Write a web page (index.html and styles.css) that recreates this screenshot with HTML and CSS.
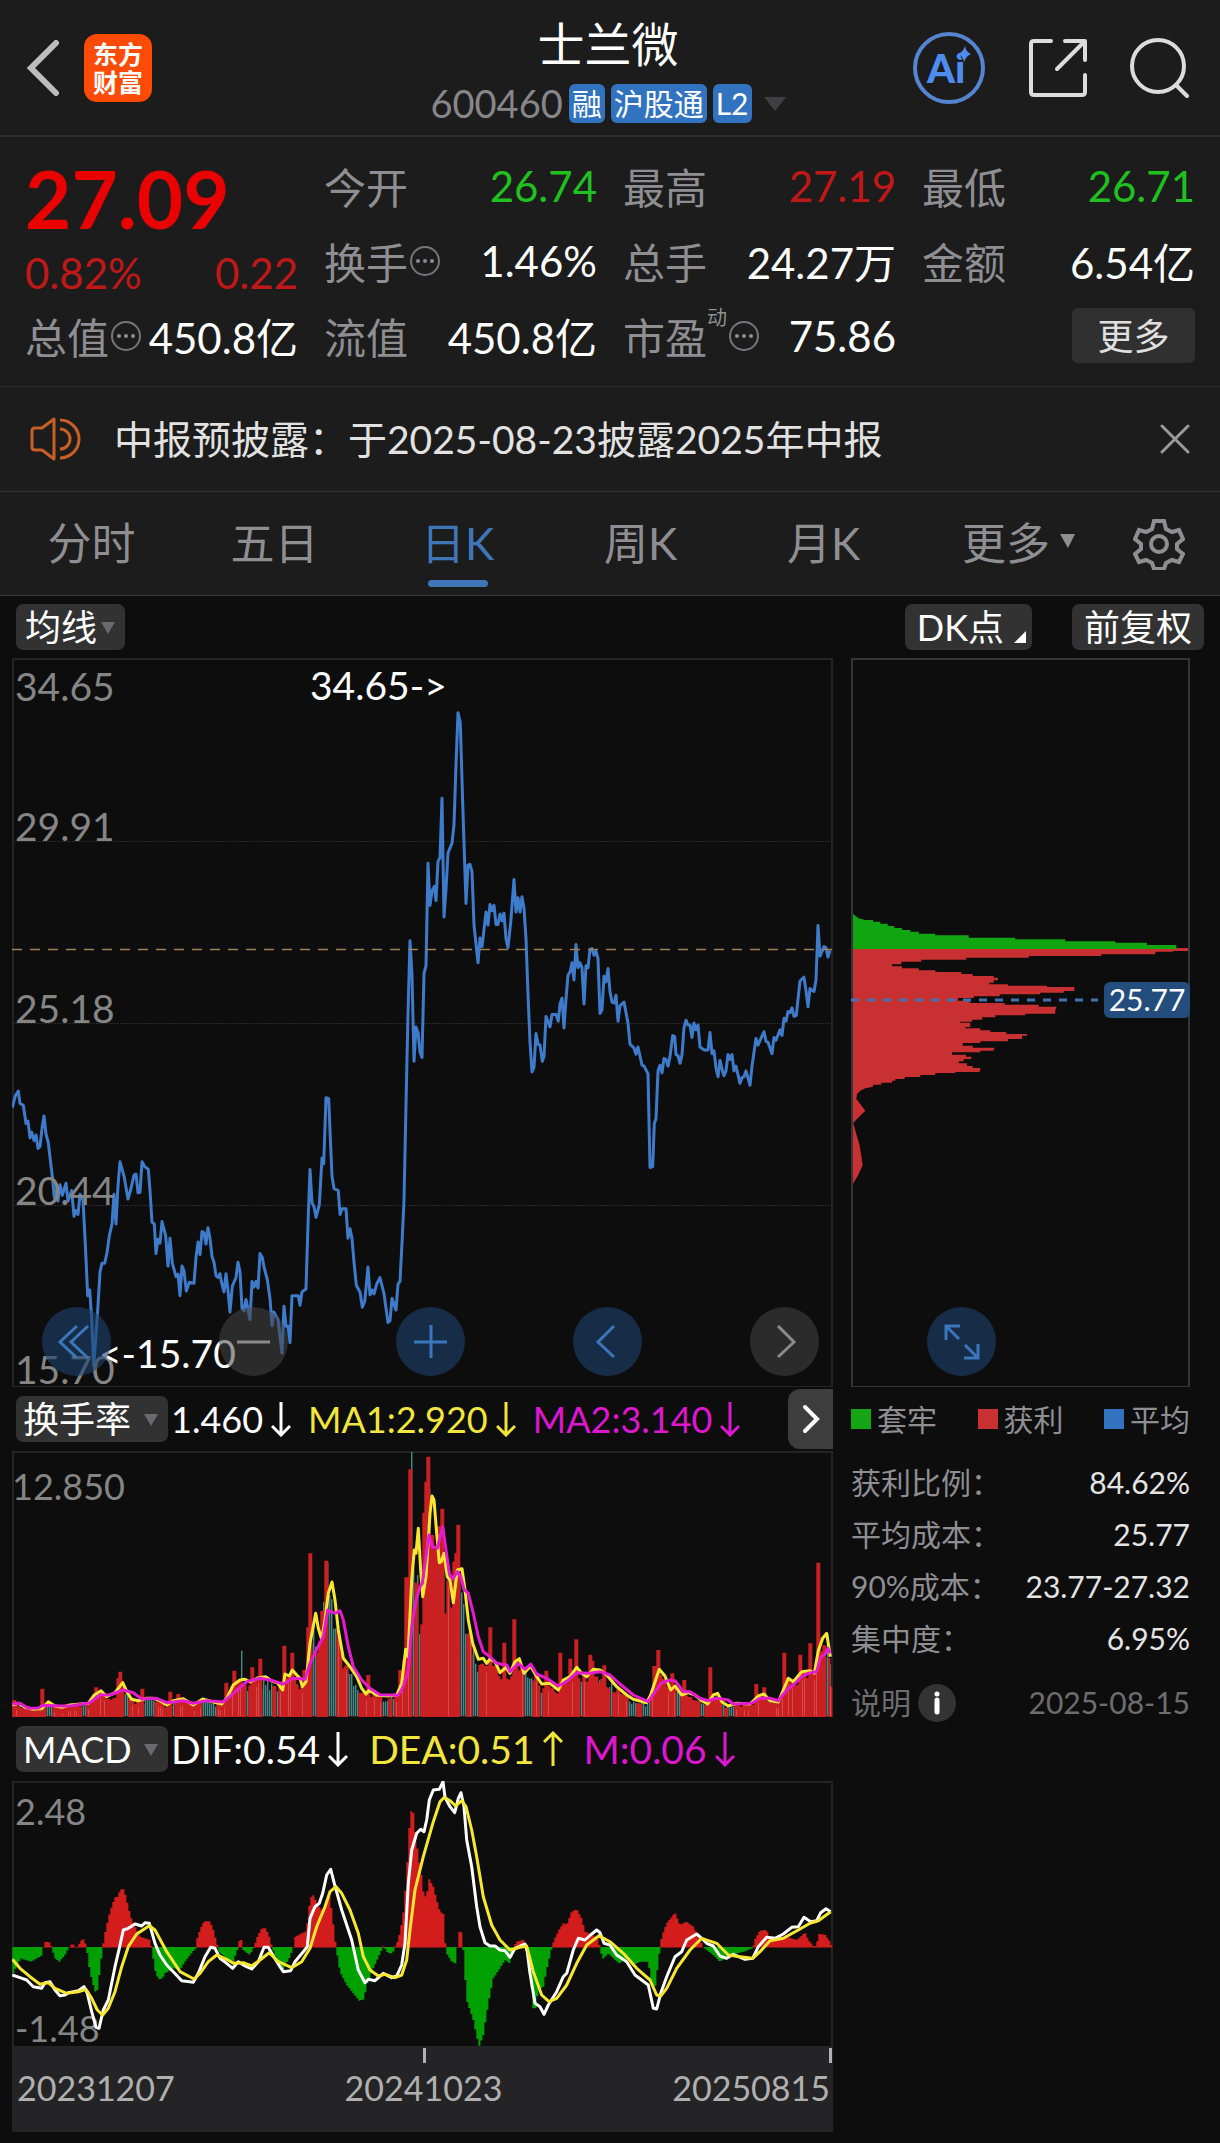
FILE: index.html
```html
<!DOCTYPE html>
<html lang="zh-CN">
<head>
<meta charset="utf-8">
<meta name="viewport" content="width=device-width, initial-scale=1">
<title>士兰微 600460</title>
<link rel="stylesheet" href="styles.css">
</head>
<body>
<header class="topbar">
  <div class="topbar-left">
    <button class="icon-btn" aria-label="返回"><svg width="34" height="56" viewBox="0 0 34 56"><path d="M30 3 5 28l25 25" fill="none" stroke="#bdbdbd" stroke-width="6" stroke-linecap="round"/></svg></button>
    <div class="logo"><span>东方</span><span>财富</span></div>
  </div>
  <div class="topbar-title">
    <h1>士兰微</h1>
    <div class="code-row">
      <span class="code">600460</span>
      <span class="chip">融</span><span class="chip">沪股通</span><span class="chip">L2</span>
      <svg class="code-arrow" width="22" height="14" viewBox="0 0 22 14"><path d="M0 0h22L11 14z" fill="#3f3f41"/></svg>
    </div>
  </div>
  <div class="topbar-right">
    <button class="icon-btn" aria-label="Ai 助手"><svg width="74" height="74" viewBox="0 0 74 74"><circle cx="37" cy="37" r="34" fill="none" stroke="#5585d0" stroke-width="4"/><text class="ai-text" x="15" y="52">Ai</text><circle cx="54" cy="23" r="6" fill="#1c1c1c"/><path d="M53 15q1 6 6 8-5 2-7 8-1-6-6-8 5-2 7-8z" fill="#4f8cf0"/></svg></button>
    <button class="icon-btn" aria-label="分享"><svg width="60" height="60" viewBox="0 0 60 60"><g fill="none" stroke="#dcdcdc" stroke-width="4" stroke-linecap="round" stroke-linejoin="round"><path d="M23 3H6q-3 0-3 3v48q0 3 3 3h48q3 0 3-3V37M37 3h20v19M56 4 29 31"/></g></svg></button>
    <button class="icon-btn" aria-label="搜索"><svg width="60" height="60" viewBox="0 0 60 60"><g fill="none" stroke="#dcdcdc" stroke-width="4" stroke-linecap="round"><circle cx="28" cy="28" r="26"/><path d="M46 47 57 58"/></g></svg></button>
  </div>
</header>

<section class="quote" aria-label="行情">
  <div class="price-block">
    <strong class="price">27.09</strong>
    <div class="change"><span>0.82%</span><span>0.22</span></div>
  </div>
  <div class="item"><span class="k">今开</span><span class="v down">26.74</span></div>
  <div class="item"><span class="k">最高</span><span class="v up">27.19</span></div>
  <div class="item"><span class="k">最低</span><span class="v down">26.71</span></div>
  <div class="item"><span class="k">换手<svg class="dots" viewBox="0 0 30 30"><use href="#dots"/></svg></span><span class="v">1.46%</span></div>
  <div class="item"><span class="k">总手</span><span class="v">24.27万</span></div>
  <div class="item"><span class="k">金额</span><span class="v">6.54亿</span></div>
  <div class="item"><span class="k">总值<svg class="dots" viewBox="0 0 30 30"><use href="#dots"/></svg></span><span class="v">450.8亿</span></div>
  <div class="item"><span class="k">流值</span><span class="v">450.8亿</span></div>
  <div class="item"><span class="k">市盈<sup>动</sup><svg class="dots" viewBox="0 0 30 30"><g id="dots"><circle cx="15" cy="15" r="14" fill="none" stroke="#77777b" stroke-width="2"/><g fill="#8e8e93"><circle cx="8" cy="15" r="2"/><circle cx="15" cy="15" r="2"/><circle cx="22" cy="15" r="2"/></g></g></svg></span><span class="v">75.86</span></div>
  <div class="item item-end"><button class="more-btn">更多</button></div>
</section>

<section class="notice">
  <svg width="52" height="44" viewBox="0 0 52 44"><g fill="none" stroke="#c85f24" stroke-width="3"><path d="M24 2v40L12 33H5q-3 0-3-3V14q0-3 3-3h7z" stroke-linejoin="round"/><path d="M30 3a19 19 0 0 1 0 38M30 12a10 10 0 0 1 0 20"/></g></svg>
  <p>中报预披露：于2025-08-23披露2025年中报</p>
  <button class="icon-btn" aria-label="关闭"><svg width="30" height="30" viewBox="0 0 30 30"><path d="M2 2l26 26M28 2 2 28" stroke="#9a9a9a" stroke-width="3" stroke-linecap="round"/></svg></button>
</section>

<nav class="tabs">
  <button class="tab">分时</button>
  <button class="tab">五日</button>
  <button class="tab active">日K</button>
  <button class="tab">周K</button>
  <button class="tab">月K</button>
  <button class="tab tab-more">更多<svg width="15" height="14" viewBox="0 0 15 14"><path d="M0 0h15L8 14z" fill="#8e8e93"/></svg></button>
  <button class="tab-gear" aria-label="设置"><svg width="52" height="52" viewBox="0 0 52 52"><g fill="none" stroke="#8e8e93" stroke-width="4"><path d="M21 3h10l2 8 6 3 7-2 4 9-6 5v5l6 5-4 8-7-2-6 3-2 6H21l-2-6-6-3-7 2-4-8 6-5v-5l-6-5 4-9 7 2 6-3z"/><circle cx="26" cy="26" r="8"/></g></svg></button>
</nav>

<main class="charts">
  <div class="toolbar">
    <span class="select tight"><select aria-label="主图指标"><option>均线</option></select></span>
    <div class="toolbar-right">
      <button class="pill dk">DK点</button>
      <button class="pill">前复权</button>
    </div>
  </div>

  <div class="columns price-row">
    <svg id="price" class="chart" viewBox="0 0 821 729" role="img" aria-label="日K 走势">
      <rect class="frame" x="1" y="1" width="819" height="728"/>
      <path class="gridline" d="M0 183.500h820M0 365.500h820M0 547.500h820"/>
      <polyline id="closeLine" class="line-blue"/>
      <path d="M0 291.500h820" stroke="#a08050" stroke-width="1.500" stroke-dasharray="10 8"/>
      <g class="axis-label big">
        <text x="3" y="43">34.65</text><text x="3" y="183">29.91</text><text x="3" y="365">25.18</text><text x="3" y="547">20.44</text><text x="3" y="726">15.70</text>
      </g>
      <g class="mark"><text x="298" y="42">34.65-&gt;</text><text x="87" y="710">&lt;-15.70</text></g>
    </svg>
    <svg id="cost" class="chart" viewBox="0 0 339 729" role="img" aria-label="筹码分布">
      <path id="costRed" fill="#c93031"/><path id="costGreen" fill="#12a512"/>
      <rect class="frame strong" x="1" y="1" width="337" height="728"/>
      <path d="M0 342h247" stroke="#3f72b5" stroke-width="3" stroke-dasharray="8 8"/>
      <rect x="253" y="324" width="86" height="36" rx="6" fill="#234d7c"/>
      <text class="avg" x="296" y="353">25.77</text>
    </svg>
    <div class="controls">
      <button class="round" aria-label="最早"><svg viewBox="0 0 69 69"><path d="M35 19 18 35l17 16M46 19 29 35l17 16"/></svg></button>
      <button class="round gray" aria-label="缩小"><svg viewBox="0 0 69 69"><path d="M18 35h33"/></svg></button>
      <button class="round" aria-label="放大"><svg viewBox="0 0 69 69"><path d="M18 35h33M35 18v33"/></svg></button>
      <button class="round" aria-label="向左"><svg viewBox="0 0 69 69"><path d="M41 19 25 35l16 15"/></svg></button>
      <button class="round gray" aria-label="向右"><svg viewBox="0 0 69 69"><path d="M28 19l16 16-16 15"/></svg></button>
      <button class="round" aria-label="全屏"><svg viewBox="0 0 69 69"><path d="M19 33V19h14M20 20l12 12M51 37v14H37M50 50 38 38"/></svg></button>
    </div>
  </div>

  <div class="columns">
    <div class="left">
      <div class="indicator compact">
        <span class="select"><select aria-label="副图指标一"><option>换手率</option></select></span>
        <span class="ind white">1.460<svg class="arr" viewBox="0 0 20 36"><path d="M10 1v32M1 25l9 9 9-9"/></svg></span>
        <span class="ind yellow">MA1:2.920<svg class="arr" viewBox="0 0 20 36"><path d="M10 1v32M1 25l9 9 9-9"/></svg></span>
        <span class="ind pink">MA2:3.140<svg class="arr" viewBox="0 0 20 36"><path d="M10 1v32M1 25l9 9 9-9"/></svg></span>
        <button class="next" aria-label="更多指标"><svg width="18" height="30" viewBox="0 0 18 30"><path d="M3 3l12 12L3 27" fill="none" stroke="#fff" stroke-width="4" stroke-linecap="round"/></svg></button>
      </div>
      <svg class="chart" viewBox="0 0 821 266" role="img" aria-label="换手率">
        <rect class="frame" x="1" y="1" width="819" height="265"/>
        <path id="volCyan" fill="#5fbcbc"/><path id="volRed" fill="#c92022"/><path id="volSlit" fill="#dc7474"/>
        <polyline id="ma1" class="line-yellow"/><polyline id="ma2" class="line-pink"/>
        <g class="axis-label"><text x="0" y="49">12.850</text></g>
      </svg>
      <div class="indicator">
        <span class="select"><select aria-label="副图指标二"><option>MACD</option></select></span>
        <span class="ind white">DIF:0.54<svg class="arr" viewBox="0 0 20 36"><path d="M10 1v32M1 25l9 9 9-9"/></svg></span>
        <span class="ind yellow">DEA:0.51<svg class="arr" viewBox="0 0 20 36"><path d="M10 35V3M1 11l9-9 9 9"/></svg></span>
        <span class="ind pink">M:0.06<svg class="arr" viewBox="0 0 20 36"><path d="M10 1v32M1 25l9 9 9-9"/></svg></span>
      </div>
      <svg class="chart" viewBox="0 0 821 266" role="img" aria-label="MACD">
        <rect class="frame" x="1" y="1" width="819" height="265"/>
        <g class="axis-label"><text x="3" y="44">2.48</text><text x="3" y="261">-1.48</text></g>
        <path id="macdRed" fill="#d31c1c"/><path id="macdGreen" fill="#00a000"/>
        <polyline id="dif" class="line-white"/><polyline id="dea" class="line-yellow"/>
      </svg>
      <div class="dates"><span>20231207</span><span class="tick mid">20241023</span><span class="tick end">20250815</span></div>
    </div>

    <aside class="cost-info">
      <ul class="legend">
        <li><i class="sq green"></i>套牢</li><li><i class="sq red"></i>获利</li><li><i class="sq blue"></i>平均</li>
      </ul>
      <dl>
        <div><dt>获利比例：</dt><dd>84.62%</dd></div>
        <div><dt>平均成本：</dt><dd>25.77</dd></div>
        <div><dt>90%成本：</dt><dd>23.77-27.32</dd></div>
        <div><dt>集中度：</dt><dd>6.95%</dd></div>
      </dl>
      <div class="explain">
        <span>说明</span>
        <button class="info" aria-label="说明"><svg width="39" height="39" viewBox="0 0 39 39"><circle cx="20" cy="20" r="19" fill="#333"/><circle cx="20" cy="11" r="2.500" fill="#fff"/><path d="M20 17v12" stroke="#fff" stroke-width="5" stroke-linecap="round"/></svg></button>
        <time datetime="2025-08-15">2025-08-15</time>
      </div>
    </aside>
  </div>
</main>
<script src="charts.js"></script>
</body>
</html>
```
FILE: styles.css
```css
* { box-sizing: border-box; }
body {
  margin: 0;
  background: #0d0d0d;
  color: #fff;
  font-family: Lato, "Noto Sans CJK SC", sans-serif;
}
button, select {
  font: inherit;
  color: inherit;
  border: 0;
  margin: 0;
  padding: 0;
  background: none;
}
h1, p, ul, dl, dd { margin: 0; padding: 0; }
svg { display: block; flex: none; }

.topbar, .quote, .notice, .tabs { background: #1c1c1c; }

.topbar {
  display: grid;
  grid-template-columns: 1fr auto 1fr;
  align-items: center;
  height: 137px;
  padding: 0 30px 0 26px;
  border-bottom: 2px solid #2e2e2f;
}
.topbar-left { display: flex; align-items: center; gap: 24px; }
.topbar-right { display: flex; align-items: center; justify-content: flex-end; gap: 42px; }
.logo {
  width: 68px;
  height: 68px;
  padding: 6px 0;
  border-radius: 13px;
  background: #ff4b05;
  font-size: 25px;
  font-weight: 700;
  line-height: 28px;
  text-align: center;
}
.logo span { display: block; }
.topbar-title { text-align: center; }
h1 { font-size: 47px; font-weight: 400; line-height: 72px; }
.code-row { display: flex; align-items: center; gap: 6px; line-height: 39px; height: 48px; }
.code { font-size: 38px; color: #87878b; }
.chip { padding: 0 3px; border-radius: 6px; background: #3273c0; font-size: 30px; height: 39px; line-height: 38px; }
.code-arrow { margin-left: 6px; }
.ai-text { font-size: 40px; font-weight: 900; fill: #4f8cf0; }

.quote {
  display: grid;
  grid-template-columns: repeat(4, minmax(0, 1fr));
  grid-template-rows: repeat(3, 75px);
  column-gap: 26px;
  padding: 13px 25px 11px;
  border-bottom: 1px solid #2a2a2b;
  font-size: 42px;
}
.price-block { grid-row: span 2; color: #c01818; }
.price { display: block; font-size: 80px; font-weight: 700; line-height: 96px; color: #eb0000; }
.change { display: flex; justify-content: space-between; line-height: 54px; }
.item { display: flex; align-items: center; justify-content: space-between; padding-bottom: 4px; white-space: nowrap; }
.item-end { justify-content: flex-end; }
.k { display: flex; align-items: center; color: #8e8e93; }
.k sup { align-self: flex-start; font-size: 20px; line-height: 24px; }
.dots { width: 30px; height: 30px; margin-left: 2px; }
.up { color: #c01818; }
.down { color: #20c020; }
.more-btn { width: 123px; height: 55px; border-radius: 6px; background: #303031; color: #e0e0e0; font-size: 36px; line-height: 50px; }

.notice {
  display: flex;
  align-items: center;
  gap: 32px;
  height: 105px;
  padding: 0 30px;
  border-bottom: 1px solid #333435;
  color: #e2e2e2;
  font-size: 39px;
}
.notice p { flex: 1; padding-bottom: 5px; }

.tabs {
  display: grid;
  grid-template-columns: repeat(6, minmax(0, 3fr)) minmax(0, 2fr);
  height: 104px;
  border-bottom: 1px solid #3a3a3b;
  color: #8e8e93;
  font-size: 44px;
}
.tab { position: relative; padding-bottom: 5px; }
.tab.active { color: #3f76b8; }
.tab.active::after {
  content: "";
  position: absolute;
  left: calc(50% - 30px);
  bottom: 8px;
  width: 60px;
  height: 7px;
  border-radius: 4px;
  background: #3f76b8;
}
.tab-more { display: flex; align-items: center; justify-content: center; gap: 10px; padding-left: 24px; }
.tab-gear { display: flex; align-items: center; justify-content: center; }

.toolbar { display: flex; justify-content: space-between; align-items: center; height: 62px; padding: 0 16px; }
.toolbar-right { display: flex; gap: 40px; }
.pill { position: relative; height: 46px; padding: 0 12px; border-radius: 7px; background: #323233; font-size: 36px; line-height: 44px; }
.dk { padding-right: 28px; }
.dk::after {
  content: "";
  position: absolute;
  right: 6px;
  bottom: 7px;
  border: 6px solid;
  border-color: transparent #fff #fff transparent;
}
.select { position: relative; display: flex; border-radius: 7px; background: #323233; }
.select select { appearance: none; height: 46px; padding: 0 36px 0 7px; font-size: 36px; line-height: 44px; }
.select.tight select { padding: 0 27px 0 9px; }
.select option { background: #323233; }
.select::after {
  content: "";
  position: absolute;
  right: 10px;
  top: 18px;
  border: 7px solid transparent;
  border-top: 12px solid #6a6a6c;
  border-bottom: 0;
  pointer-events: none;
}

.columns {
  display: grid;
  grid-template-columns: minmax(0, 821fr) minmax(0, 339fr);
  column-gap: 18px;
  padding: 0 30px 0 12px;
}
.price-row { position: relative; }
.chart { width: 100%; height: auto; }
.frame { fill: none; stroke: #242425; stroke-width: 2; }
.frame.strong { stroke: #353536; }
.gridline { stroke: #29292a; stroke-dasharray: 2 1; }
.axis-label { font-size: 36px; fill: #858585; }
.axis-label.big { font-size: 39px; }
.mark { font-size: 39px; fill: #fff; }
.avg { font-size: 30px; fill: #fff; text-anchor: middle; }
.line-blue, .line-yellow, .line-pink, .line-white { fill: none; stroke-width: 3; stroke-linejoin: round; }
.line-blue { stroke: #3e7bcb; }
.line-yellow { stroke: #f7e732; }
.line-pink { stroke: #e51bcf; }
.line-white { stroke: #fff; }

.controls { position: absolute; left: 42px; right: 224px; bottom: 11px; display: flex; justify-content: space-between; }
.round { width: 69px; height: 69px; border-radius: 50%; background: rgba(30, 66, 110, 0.600); }
.round svg { width: 69px; height: 69px; fill: none; stroke: #3b77bd; stroke-width: 3; }
.round.gray { background: rgba(70, 70, 70, 0.550); }
.round.gray svg { stroke: #8b8b8b; }

.indicator { display: flex; align-items: center; height: 64px; padding-left: 4px; font-size: 39px; white-space: nowrap; }
.ind { display: flex; align-items: center; gap: 8px; margin: 0 18px 0 3px; }
.indicator.compact { font-size: 36px; }
.compact .ind { margin-right: 14px; }
.arr { width: 20px; height: 36px; fill: none; stroke: currentColor; stroke-width: 3; }
.yellow { color: #f2e63c; }
.pink { color: #dc17cf; }
.next {
  display: flex;
  align-items: center;
  justify-content: center;
  width: 45px;
  height: 60px;
  margin-left: auto;
  border-radius: 12px 0 0 12px;
  background: #3d3d3e;
}

.dates {
  display: flex;
  justify-content: space-between;
  height: 85px;
  padding: 0 3px 0 5px;
  background: #242426;
  color: #b0b0b0;
  font-size: 34px;
  line-height: 82px;
}
.tick { position: relative; }
.tick::before { content: ""; position: absolute; top: 1px; width: 3px; height: 15px; background: #b0b0b0; }
.mid::before { left: 50%; }
.end::before { right: -2px; }

.cost-info { padding-top: 12px; color: #8e8e93; font-size: 30px; line-height: 40px; }
.legend { display: flex; justify-content: space-between; list-style: none; }
.legend li { display: flex; align-items: center; gap: 6px; }
.sq { width: 20px; height: 20px; }
.green { background: #16a615; }
.red { background: #c93031; }
.blue { background: #3273c0; }
.cost-info dl { padding: 17px 0 12px; }
.cost-info dl div { display: flex; justify-content: space-between; line-height: 52px; }
.cost-info dd { color: #e4e4e4; }
.explain { display: flex; align-items: center; padding-top: 6px; color: #6d6d70; }
.info { margin-left: 6px; }
.explain time { margin-left: auto; }

.charts { padding-bottom: 11px; }
```
FILE: charts.js
```js
// Series are stored at three units per chart pixel, measured from the left
// edge of the screen; the price series has its own vertical unit.
const close = `37,957 46,932 55,922 60,948 70,952 78,990 84,985 90,1020 95,1008 102,1026 108,1014 114,1042 120,1038 126,1000 132,974 138,1012 145,1030 158,1108 163,1145 168,1130 174,1152 180,1118 187,1140 198,1115 204,1152 215,1130 222,1184 228,1172 234,1180 240,1138 249,1150 256,1242 263,1350 269,1338 275,1400 281,1497 287,1440 293,1380 300,1300 306,1282 314,1282 321,1260 328,1225 336,1200 342,1138 348,1200 354,1120 360,1070 372,1100 384,1148 392,1128 402,1098 408,1096 414,1135 420,1134 426,1070 434,1080 445,1086 450,1130 456,1196 463,1200 468,1262 474,1232 480,1240 486,1195 497,1225 504,1288 510,1230 517,1282 528,1310 534,1305 540,1350 546,1288 552,1298 559,1340 568,1322 582,1324 588,1270 594,1238 600,1264 606,1216 612,1218 618,1242 624,1208 630,1230 636,1268 642,1280 648,1308 654,1312 660,1304 664,1320 672,1342 678,1304 684,1340 690,1384 697,1330 708,1312 714,1280 720,1300 726,1376 732,1382 738,1358 750,1400 756,1320 762,1332 768,1320 774,1334 780,1262 787,1270 792,1290 802,1316 810,1356 816,1412 821,1384 834,1400 846,1470 852,1372 858,1414 864,1414 870,1448 876,1350 895,1350 900,1370 906,1342 918,1336 924,1200 930,1086 936,1156 942,1164 948,1186 958,1160 966,1062 971,1074 978,936 986,938 991,1020 996,1100 1002,1126 1015,1130 1020,1180 1026,1168 1038,1168 1044,1230 1050,1210 1056,1230 1062,1280 1069,1328 1080,1342 1087,1374 1094,1362 1104,1290 1110,1348 1116,1338 1122,1346 1130,1326 1140,1312 1152,1346 1164,1406 1170,1402 1176,1356 1188,1380 1194,1326 1200,1320 1206,1240 1212,1150 1218,950 1224,760 1230,608 1236,680 1242,860 1248,788 1254,800 1260,840 1266,852 1272,676 1278,660 1284,446 1290,534 1296,504 1303,494 1308,524 1314,442 1320,434 1326,310 1332,558 1338,500 1344,424 1356,404 1362,365 1368,240 1374,131 1381,152 1388,320 1398,530 1404,450 1410,448 1416,464 1422,575 1434,654 1440,602 1446,620 1458,548 1464,575 1470,532 1476,545 1482,534 1488,574 1494,574 1500,552 1506,566 1512,550 1518,604 1524,622 1532,570 1542,480 1548,548 1554,518 1560,548 1566,516 1572,540 1578,604 1584,720 1590,820 1596,882 1602,872 1608,802 1614,824 1620,826 1627,860 1632,850 1638,766 1650,788 1656,762 1668,762 1675,776 1680,740 1686,728 1692,790 1698,730 1704,680 1711,672 1716,654 1722,690 1728,616 1734,664 1740,654 1746,664 1752,740 1758,660 1764,664 1770,626 1776,624 1782,638 1788,630 1794,645 1800,760 1806,752 1812,682 1818,694 1824,666 1830,714 1836,736 1843,738 1848,722 1854,776 1860,744 1872,736 1884,780 1890,824 1902,832 1908,845 1914,830 1926,868 1932,870 1944,886 1950,1082 1958,1080 1963,990 1968,980 1974,880 1980,868 1986,884 1992,854 1998,856 2004,870 2010,850 2018,806 2024,808 2028,846 2034,848 2040,864 2046,846 2052,790 2058,774 2064,784 2070,784 2076,810 2082,780 2088,794 2094,784 2100,830 2112,836 2124,836 2130,800 2136,844 2142,838 2148,874 2154,892 2160,858 2166,876 2172,890 2178,880 2184,846 2190,856 2196,846 2202,880 2208,870 2220,906 2226,894 2232,892 2238,880 2250,910 2256,870 2268,812 2274,826 2292,798 2298,818 2304,820 2316,844 2322,810 2328,816 2340,794 2346,806 2352,770 2358,776 2364,756 2370,758 2376,748 2382,766 2389,764 2394,730 2400,692 2412,684 2418,712 2424,746 2430,708 2442,714 2448,690 2454,576 2460,640 2472,620 2478,622 2484,642 2490,628`;
const ma1 = `37,975 55,970 75,982 100,988 125,986 145,965 165,978 185,982 210,975 265,970 283,945 303,932 320,950 345,938 368,908 382,938 395,958 415,962 440,955 460,955 480,962 500,975 520,962 550,956 580,975 608,957 640,966 665,972 680,955 700,915 720,900 735,898 750,906 775,893 797,890 815,903 832,908 848,930 855,882 868,888 877,870 890,885 900,895 907,920 918,905 930,790 947,700 955,745 965,778 975,720 985,640 996,606 1005,660 1015,750 1030,835 1050,860 1070,890 1085,925 1098,942 1108,930 1130,946 1165,948 1190,945 1205,910 1217,808 1224,830 1235,600 1243,510 1248,520 1255,445 1262,570 1268,650 1278,590 1290,400 1296,348 1302,360 1310,460 1318,548 1324,545 1332,520 1342,590 1350,600 1360,668 1372,570 1386,566 1395,630 1405,720 1418,790 1435,838 1450,835 1460,850 1470,838 1485,845 1500,878 1518,862 1530,880 1545,845 1558,836 1572,880 1592,858 1610,890 1625,912 1650,910 1675,930 1690,900 1710,890 1730,862 1745,880 1760,890 1780,868 1800,870 1820,885 1850,920 1880,945 1900,958 1940,968 1952,945 1965,905 1978,868 1995,888 2012,930 2025,918 2045,945 2065,938 2085,945 2105,962 2123,972 2140,945 2153,940 2165,965 2185,978 2210,970 2250,972 2275,948 2292,942 2310,962 2335,966 2350,930 2365,895 2380,905 2405,875 2430,872 2443,880 2455,812 2468,775 2480,760 2491,830`;
const ma2 = `37,972 60,970 85,985 115,984 130,976 185,978 215,977 270,968 300,945 330,945 370,930 400,938 425,957 470,955 500,968 550,962 580,970 620,962 670,966 700,940 740,905 780,895 810,900 850,912 880,895 915,898 930,850 950,808 970,770 983,690 1005,700 1020,692 1030,720 1045,800 1060,860 1085,900 1110,925 1140,944 1170,945 1195,946 1210,920 1225,870 1235,740 1247,665 1260,620 1267,610 1275,550 1287,465 1297,500 1312,505 1328,440 1338,510 1348,580 1358,598 1372,575 1382,590 1392,628 1405,640 1420,700 1435,770 1450,815 1470,830 1490,850 1520,855 1530,875 1555,850 1575,868 1592,852 1610,882 1640,895 1675,918 1700,905 1730,878 1770,880 1800,875 1830,885 1860,912 1900,945 1945,965 1965,935 1985,908 2010,900 2025,902 2050,935 2070,935 2100,955 2125,962 2150,955 2185,960 2200,972 2255,970 2280,955 2310,955 2335,962 2360,930 2380,915 2405,890 2425,880 2450,875 2462,832 2475,822 2484,805 2491,820`;
const redSpikes = `43,960 127,926 289,922 361,875 355,895 427,926 511,935 535,942 679,908 703,872 757,862 781,836 853,797 877,818 913,870 931,520 925,742 979,542 967,692 1105,885 1201,870 1213,840 1219,592 1231,268 1249,608 1273,398 1279,305 1285,230 1297,465 1327,386 1321,438 1315,440 1375,434 1369,520 1363,545 1471,742 1513,788 1543,718 1639,872 1681,818 1711,836 1729,778 1771,824 1777,842 1813,856 1975,810 1963,858 2017,880 2053,900 2131,862 2269,912 2293,922 2353,818 2401,824 2431,790 2455,548 2495,920`;
const cyanSpikes = `727,812 985,548 973,666 997,658 1237,216 1255,585 1291,326 1261,762 1333,540 2461,770 2485,765`;
const cyanRuns = `60,60 72,75 140,160 248,262 370,385 435,465 490,492 508,525 605,650 725,730 740,745 785,815 830,835 892,898 936,950 983,1012 1045,1050 1058,1076 1148,1166 1178,1183 1235,1246 1254,1262 1290,1292 1332,1336 1381,1402 1418,1436 1524,1528 1570,1600 1618,1630 1650,1654 1742,1748 1798,1804 1830,1838 1884,1912 1928,1951 2027,2042 2103,2116 2148,2152 2168,2173 2184,2202 2220,2224 2248,2252 2308,2313 2358,2362 2416,2422 2436,2440 2460,2464 2478,2488`;
const macd = `37,795 50,768 62,745 78,750 95,755 110,745 128,735 130,711 131,694 150,698 155,711 165,745 178,755 195,735 207,712 218,700 225,711 236,709 240,694 250,688 258,705 260,715 270,785 285,845 292,840 300,780 308,711 318,655 330,605 345,562 355,560 360,538 372,538 380,570 392,620 405,650 420,680 450,690 455,712 465,780 475,808 487,806 495,790 520,775 540,780 555,755 570,735 587,715 590,690 600,660 612,634 630,634 640,660 652,705 656,725 680,745 700,755 712,720 716,694 725,690 730,720 750,735 762,711 770,685 785,655 797,655 808,680 816,711 830,750 850,780 870,740 880,711 884,682 900,672 918,664 925,620 930,565 940,556 950,580 965,600 975,590 987,555 995,600 1003,670 1008,712 1020,785 1040,825 1060,850 1078,872 1092,868 1100,825 1120,775 1138,735 1150,709 1165,730 1178,730 1185,711 1195,690 1205,640 1212,595 1220,490 1230,320 1238,288 1244,350 1255,440 1265,500 1272,562 1280,555 1288,508 1300,530 1310,570 1320,605 1330,612 1336,700 1340,730 1355,755 1366,760 1372,711 1376,670 1382,655 1388,690 1392,750 1400,870 1420,930 1437,1010 1450,975 1465,880 1480,805 1500,775 1515,750 1530,760 1540,712 1550,695 1570,690 1582,711 1588,770 1600,895 1606,895 1615,840 1630,830 1640,780 1655,715 1662,690 1680,655 1690,640 1700,645 1715,605 1730,597 1745,625 1755,665 1775,672 1795,690 1800,715 1808,748 1825,730 1845,750 1860,760 1880,745 1900,765 1920,755 1945,755 1955,820 1965,835 1972,780 1980,715 1985,680 2000,640 2025,608 2040,645 2060,635 2080,650 2100,690 2110,711 2120,720 2140,735 2160,755 2190,735 2230,725 2258,715 2264,690 2280,662 2300,660 2310,685 2360,680 2390,690 2415,668 2425,690 2440,708 2450,708 2455,672 2475,674 2490,695 2495,708`;
const dif = `37,795 60,803 80,810 100,830 125,835 135,818 150,815 165,840 180,857 195,855 205,848 235,842 252,830 262,850 275,905 288,952 297,955 310,900 325,870 345,770 358,715 370,660 385,655 405,642 425,648 435,638 448,640 455,665 465,700 480,735 500,765 520,785 545,812 580,817 595,790 615,740 632,712 645,715 660,745 680,760 698,775 715,755 735,768 755,777 775,755 792,712 805,712 818,735 840,770 850,785 872,782 885,755 910,725 922,710 930,625 945,590 958,580 968,550 980,495 992,478 1003,520 1025,600 1055,690 1075,780 1095,818 1105,808 1125,812 1150,790 1175,803 1190,798 1205,765 1215,700 1225,520 1235,420 1250,370 1262,358 1272,365 1280,330 1288,270 1300,240 1318,238 1329,215 1335,262 1350,290 1364,308 1375,265 1383,248 1392,290 1400,390 1415,470 1430,590 1440,650 1455,698 1470,708 1485,708 1500,720 1515,722 1530,742 1545,715 1575,702 1582,725 1590,790 1605,880 1620,890 1632,913 1645,885 1670,845 1690,800 1700,790 1720,720 1735,685 1755,690 1775,672 1790,660 1800,668 1812,700 1830,705 1850,735 1880,755 1905,795 1945,825 1960,895 1970,897 1982,850 2000,800 2025,740 2045,725 2060,690 2090,672 2105,685 2120,700 2140,708 2160,738 2180,745 2200,733 2235,748 2258,745 2275,710 2300,682 2325,685 2350,672 2375,652 2395,650 2412,622 2432,635 2450,632 2462,608 2478,596 2492,605`;
const dea = `37,748 60,775 90,800 120,823 145,818 165,835 200,850 235,845 258,838 275,865 292,900 308,915 325,895 345,845 365,770 385,710 410,672 448,647 465,660 500,725 540,785 582,807 600,790 625,755 650,735 680,748 700,760 730,758 755,768 780,750 808,728 835,755 875,773 905,755 930,715 950,650 975,590 990,545 1008,530 1025,550 1050,600 1075,670 1090,740 1110,780 1135,798 1155,793 1185,803 1205,795 1220,750 1230,660 1245,540 1270,440 1300,335 1320,275 1333,262 1350,272 1367,288 1385,272 1398,290 1415,360 1430,440 1450,560 1475,645 1500,690 1530,720 1560,712 1580,708 1600,785 1625,855 1647,875 1670,865 1700,825 1730,760 1760,705 1797,677 1830,695 1870,730 1910,775 1950,810 1970,855 1982,858 2000,835 2030,775 2070,720 2105,685 2150,700 2185,735 2220,740 2258,745 2280,725 2310,692 2350,685 2395,660 2430,640 2455,632 2492,605`;
const costGreen = `65,103 85,118 105,123 128,128 150,134 172,141 192,147 215,153 240,158 265,164 315,169 415,176 555,181 705,187 855,191 950,198 1038,203 1038,210`;
const costRed = `1080,207 1080,216 1028,218 975,226 813,231 595,236 408,242 273,248 213,256 185,262 215,268 265,274 315,279 393,285 427,291 490,296 503,304 490,311 477,316 533,320 650,324 732,330 732,336 700,341 630,346 508,352 430,357 383,365 418,372 523,377 625,383 678,390 675,404 585,409 495,415 455,422 425,428 390,431 420,436 420,444 405,448 450,454 480,459 528,465 590,470 575,480 533,487 450,492 397,500 427,506 492,510 490,515 450,520 365,527 407,533 423,540 400,547 385,553 410,561 427,567 450,574 448,579 375,582 315,588 270,594 223,600 195,605 185,611 153,617 128,623 105,628 90,635 80,645 78,660 90,675 105,695 85,715 69,732 78,765 87,795 92,825 97,858 85,885 68,915 65,932`;

const parse = (s) => s.split(" ").map((p) => p.split(",").map(Number));
const put = (id, attr, value) => document.getElementById(id).setAttribute(attr, value);
const line = (id, s, mapY) =>
  put(id, "points", parse(s).map(([x, y]) => `${(x / 3 - 12).toFixed(1)},${mapY(y).toFixed(1)}`).join(" "));

// Linear interpolation of a series at x.
function at(points, x) {
  for (let i = 1; i < points.length; i++) {
    const [x0, y0] = points[i - 1];
    const [x1, y1] = points[i];
    if (x <= x1) return y0 + ((y1 - y0) * Math.max(0, x - x0)) / (x1 - x0);
  }
  return points[points.length - 1][1];
}

const subY = (y) => (y - 213) / 3;
line("closeLine", close, (y) => y / 2.0907 - 8);
line("ma1", ma1, subY);
line("ma2", ma2, subY);
line("dif", dif, subY);
line("dea", dea, subY);

// Turnover bars: wide red for rising days, hairline cyan for falling days.
const base = parse(ma1);
const reds = new Map(parse(redSpikes).map(([x, y]) => [Math.round((x - 43) / 6), y]));
const cyans = new Map(parse(cyanSpikes).map(([x, y]) => [Math.round((x - 43) / 6), y]));
const runs = parse(cyanRuns);
let red = "", cyan = "", slit = "";
for (let i = 0; i < 410; i++) {
  const x = 43 + i * 6;
  const wobble = Math.abs(Math.sin(i * 12.9898) * 43758.5453) % 1;
  let y = 1011 - (1011 - at(base, x)) * (0.7 + 0.32 * wobble);
  let falling = runs.some(([a, b]) => x >= a - 2 && x <= b + 2);
  if (reds.has(i)) { y = reds.get(i); falling = false; }
  if (cyans.has(i)) { y = cyans.get(i); falling = true; }
  const px = x / 3 - 12;
  if (falling) {
    cyan += `M${px.toFixed(1)} ${subY(y).toFixed(1)}V265h-1V${subY(y).toFixed(1)}z`;
  } else {
    const w = i > 407 ? 2 : 4;
    red += `M${(px - 2).toFixed(1)} ${subY(y).toFixed(1)}h${w}V266h-${w}z`;
    if (wobble > 0.72 && !reds.has(i)) slit += `M${px.toFixed(1)} ${(subY(y) + 6).toFixed(1)}h.5V265h-.5z`;
  }
}
put("volRed", "d", red);
put("volCyan", "d", cyan);
put("volSlit", "d", slit);

// MACD histogram in two-pixel steps around the zero line.
const hist = parse(macd);
let up = "M0 166h820v.6H0z", down = "";
for (let x = 40; x < 2496; x += 6) {
  const y = at(hist, x);
  const bar = `M${(x / 3 - 13).toFixed(1)} 166V${subY(y).toFixed(1)}h2.1V166z`;
  if (y < 711) up += bar; else down += bar;
}
put("macdRed", "d", up);
put("macdGreen", "d", down);

// Cost distribution: stepped where it is wide, a plain slope in the thin tail.
const steps = (s) => parse(s).map(([x, y]) => {
  const px = ((x - 62) / 3).toFixed(1);
  const py = (221 + y / 3).toFixed(1);
  return x < 110 ? `L${px} ${py}` : `H${px}V${py}`;
}).join("");
put("costGreen", "d", `M1 255${steps(costGreen)}V291H1z`);
put("costRed", "d", `M1 290${steps(costRed)}V532H1z`);
```
